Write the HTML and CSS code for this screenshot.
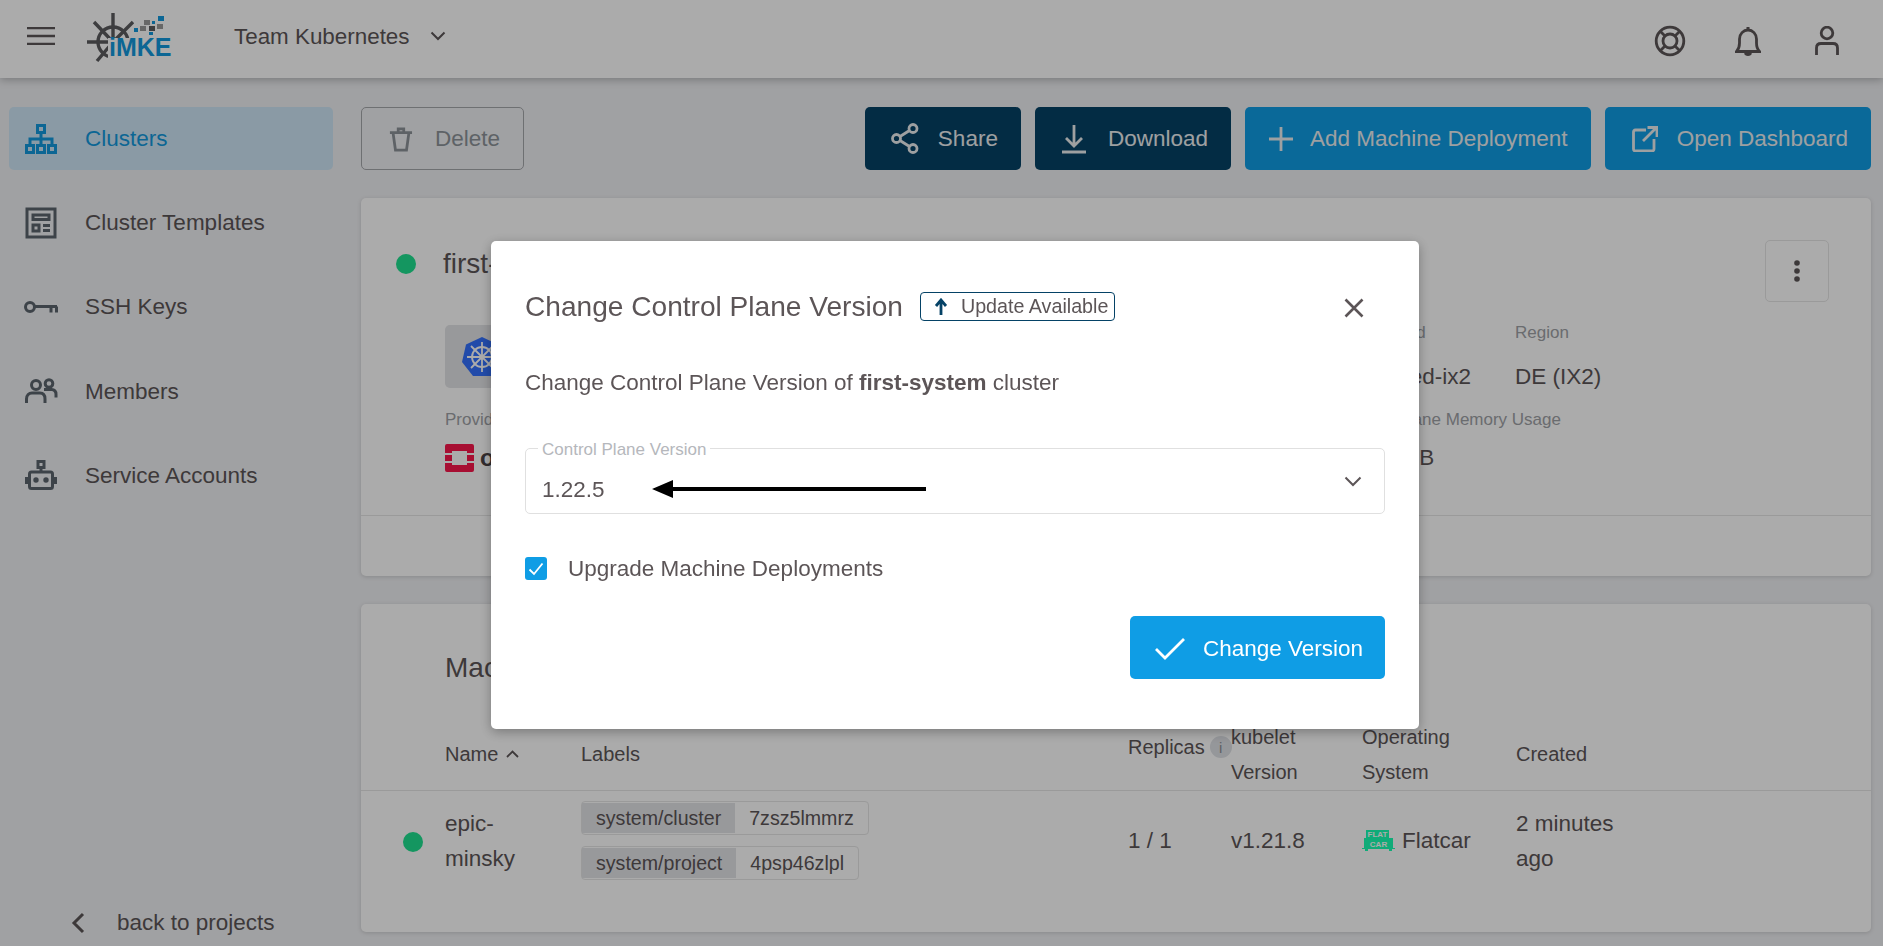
FILE: index.html
```html
<!DOCTYPE html>
<html lang="en">
  <head>
    <meta charset="UTF-8" />
    <meta name="viewport" content="width=device-width, initial-scale=1.0" />
    <title>Clusters</title>
    <link rel="stylesheet" href="styles.css">
  </head>
  <body>
    <header class="toolbar">
      <svg class="menu-icon" width="28" height="18" viewBox="0 0 28 18"><path d="M0 1h28M0 9h28M0 17h28" stroke="#5c5557" stroke-width="2.4"/></svg>
      <svg class="logo" width="90" height="64" viewBox="85 5 90 64">
        <g fill="none" stroke="#5b5b5e" stroke-width="3.4">
          <circle cx="113" cy="43" r="15"/>
          <path d="M113 14V43M87 43H113M94 23L113 43M133 23L113 43M97 62L113 43"/>
        </g>
        <rect x="108" y="39" width="22" height="22" fill="#ffffff"/>
        <g fill="#9a9a9a">
          <rect x="144" y="21" width="6" height="5"/>
          <rect x="157" y="25" width="6" height="5"/>
          <rect x="140" y="27" width="6" height="5"/>
        </g>
        <rect x="149" y="27" width="6" height="5" fill="#5b5b5e"/>
        <g fill="#1299dd">
          <rect x="158" y="17" width="6" height="5"/>
          <rect x="134" y="29" width="4" height="4"/>
          <rect x="152" y="22" width="3" height="3"/>
          <rect x="149" y="33" width="4" height="3"/>
          <text class="logo-text" x="109" y="57">iMKE</text>
        </g>
      </svg>
      <span class="team">Team Kubernetes</span>
      <svg class="team-chevron" width="16" height="10" viewBox="0 0 16 10"><path d="M1.5 1.5L8 8l6.5-6.5" fill="none" stroke="#5c5557" stroke-width="2"/></svg>
      <div class="toolbar-icons">
        <svg width="32" height="32" viewBox="0 0 32 32" fill="none" stroke="#5c5557" stroke-width="2.8"><circle cx="16" cy="16" r="13.8"/><circle cx="16" cy="16" r="7"/><path d="M6.5 6.5l4.5 4.5M25.5 6.5L21 11M6.5 25.5l4.5-4.5M25.5 25.5L21 21"/></svg>
        <svg width="26" height="30" viewBox="0 0 26 30" fill="none" stroke="#5c5557" stroke-width="2.8"><path d="M1.5 25.5c2.5-2.5 3-4.500 3-8.500v-4c0-5 3.800-9 8.500-9s8.500 4 8.500 9v4c0 4 .5 6 3 8.500z"/><path d="M13 1v3M10.500 27c.5 2 4.500 2 5 0" stroke-width="3"/></svg>
        <svg class="user-icon" width="24" height="30" viewBox="0 0 24 30" fill="none" stroke="#5c5557" stroke-width="2.800"><circle cx="12" cy="7" r="5.800"/><path d="M1.500 29v-7c0-3 1.500-4.500 4.500-4.500h12c3 0 4.500 1.500 4.500 4.500v7"/></svg>
      </div>
    </header>

    <div class="layout">
      <nav class="sidebar">
        <a class="nav-item active">
          <svg width="32" height="30" viewBox="0 0 32 30" fill="none" stroke="currentColor" stroke-width="3"><rect x="12.500" y="1.500" width="7" height="7"/><rect x="1.500" y="21.500" width="7" height="7"/><rect x="12.500" y="21.500" width="7" height="7"/><rect x="23.500" y="21.500" width="7" height="7"/><path d="M16 8.500v13M5 21.500v-6.500h22v6.500"/></svg>
          Clusters
        </a>
        <a class="nav-item">
          <svg width="32" height="32" viewBox="0 0 32 32" fill="none" stroke="#5c656e" stroke-width="3"><rect x="2" y="2" width="28" height="28"/><rect x="8" y="8" width="16" height="4.500"/><rect x="8" y="18" width="6" height="6"/><path d="M18 18.500h7M18 23.500h7"/></svg>
          Cluster Templates
        </a>
        <a class="nav-item">
          <svg width="34" height="14" viewBox="0 0 34 14" fill="none" stroke="#5c656e" stroke-width="3"><circle cx="6" cy="7" r="4.500"/><path d="M10.500 6.500H33M27 6.500v6M32.500 6.500v6"/></svg>
          SSH Keys
        </a>
        <a class="nav-item">
          <svg width="32" height="26" viewBox="0 0 32 26" fill="none" stroke="#5c656e" stroke-width="3"><circle cx="11" cy="7" r="4.500"/><circle cx="24" cy="5.500" r="3.800"/><path d="M1.500 25v-4c0-4 2.500-6 5.500-6h8c3 0 5 2 5 6v4M19 11.500h7.500c3 0 4.500 2 4.500 5v3"/></svg>
          Members
        </a>
        <a class="nav-item">
          <svg width="32" height="30" viewBox="0 0 32 30" fill="none" stroke="#5c656e" stroke-width="3"><rect x="13" y="1.500" width="6" height="6"/><path d="M16 7.500V12"/><rect x="4.500" y="12" width="23" height="16.500" rx="2"/><path d="M1.500 17v7M30.500 17v7" stroke-width="3"/><circle cx="11" cy="20" r="1.200" fill="#5c656e"/><circle cx="21" cy="20" r="1.200" fill="#5c656e"/></svg>
          Service Accounts
        </a>
        <a class="back-link">
          <svg width="14" height="22" viewBox="0 0 14 22"><path d="M12 2L3 11l9 9" fill="none" stroke="#5c5557" stroke-width="3"/></svg>
          back to projects
        </a>
      </nav>

      <main class="content">
        <div class="actions">
          <button class="btn btn-outline">
            <svg width="26" height="28" viewBox="0 0 26 28" fill="none" stroke="currentColor" stroke-width="3"><path d="M1 7h24M10 7V3h6v4M4.500 8l2.500 18h12l2.500-18"/></svg>
            Delete
          </button>
          <div class="actions-right">
            <button class="btn btn-dark btn-share">
              <svg width="28" height="31" viewBox="0 0 28 31" fill="none" stroke="currentColor" stroke-width="2.800"><circle cx="5.500" cy="15.500" r="4"/><circle cx="22" cy="5.500" r="4"/><circle cx="22" cy="25.500" r="4"/><path d="M9 13.500l9.500-6M9 17.500l9.500 6"/></svg>
              Share
            </button>
            <button class="btn btn-dark btn-download">
              <svg width="26" height="30" viewBox="0 0 26 30" fill="none" stroke="currentColor" stroke-width="2.800"><path d="M13 1v21M5 14l8 8 8-8M1 28h24" /></svg>
              Download
            </button>
            <button class="btn btn-primary btn-add">
              <svg width="26" height="26" viewBox="0 0 26 26"><path d="M13 1v24M1 13h24" stroke="currentColor" stroke-width="2.800"/></svg>
              Add Machine Deployment
            </button>
            <button class="btn btn-primary btn-open">
              <svg width="26" height="26" viewBox="0 0 26 26" fill="none" stroke="currentColor" stroke-width="2.800"><path d="M14 4H3.500C2 4 1.500 5 1.500 6v17c0 1 .5 2 2 2H20c1 0 2-.5 2-2V13M11 15L24 2M15.500 1.500H25V11"/></svg>
              Open Dashboard
            </button>
          </div>
        </div>

        <section class="card cluster-card">
          <div class="cluster-head">
            <span class="dot"></span>
            <h2 class="card-title">first-system</h2>
            <button class="more-btn">
              <svg width="6" height="22" viewBox="0 0 6 22" fill="#5c5557"><circle cx="3" cy="3" r="2.800"/><circle cx="3" cy="11" r="2.800"/><circle cx="3" cy="19" r="2.800"/></svg>
            </button>
          </div>
          <div class="info-row info-top">
            <div class="tile">
              <svg width="42" height="42" viewBox="0 0 42 42">
                <path d="M21 1L37 8.500L41 26L30 40H12L1 26L5 8.500Z" fill="#3371fe"/>
                <g fill="none" stroke="#ffffff" stroke-width="1.800"><circle cx="21" cy="21" r="10"/><path d="M21 6V36M6 21H36M10 10L32 32M32 10L10 32"/></g>
              </svg>
            </div>
            <div>
              <div class="info-label">Seed</div>
              <div class="info-value">seed-ix2</div>
            </div>
            <div>
              <div class="info-label">Region</div>
              <div class="info-value">DE (IX2)</div>
            </div>
          </div>
          <div class="info-row info-bottom">
            <div>
              <div class="info-label">Provider</div>
              <div class="info-value provider">
                <svg width="29" height="28" viewBox="0 0 29 28"><path d="M2 0H27Q29 0 29 2V9H22V7H7V9H0V2Q0 0 2 0ZM0 11H7V17H0ZM22 11H29V17H22ZM0 19H7V21H22V19H29V26Q29 28 27 28H2Q0 28 0 26Z" fill="#fa164b"/></svg>
                <span class="provider-name">openstack</span>
              </div>
            </div>
            <div>
              <div class="info-label">Control Plane Memory Usage</div>
              <div class="info-value">102.4 MB</div>
            </div>
          </div>
          <div class="card-foot"></div>
        </section>

        <section class="card machines-card">
          <h2 class="card-title machines-title">Machine Deployments</h2>
          <div class="table-row table-head">
            <div></div>
            <div class="name-head head-mid">Name
              <svg width="13" height="8" viewBox="0 0 13 8"><path d="M1 7l5.500-5.500L12 7" fill="none" stroke="#5c5557" stroke-width="1.800"/></svg>
            </div>
            <div class="head-mid">Labels</div>
            <div class="replicas-head">Replicas <span class="info-icon">i</span></div>
            <div>kubelet Version</div>
            <div>Operating System</div>
            <div class="head-mid">Created</div>
          </div>
          <div class="table-row table-body">
            <div><span class="dot row-dot"></span></div>
            <div class="cell-name">epic-minsky</div>
            <div class="chips">
              <div class="chip"><span class="chip-key">system/cluster</span><span class="chip-val">7zsz5lmmrz</span></div>
              <div class="chip"><span class="chip-key">system/project</span><span class="chip-val">4psp46zlpl</span></div>
            </div>
            <div>1 / 1</div>
            <div>v1.21.8</div>
            <div class="os">
              <svg width="33" height="21" viewBox="0 0 33 21">
                <path d="M4 0H27V8H31V18H33V19H30V21H27V19H6V21H3V19H0V18H2V8H4Z" fill="#18ffb3"/>
                <text class="os-text" x="15.500" y="7">FLAT</text>
                <text class="os-text" x="16.500" y="16.500">CAR</text>
              </svg>
              Flatcar
            </div>
            <div class="cell-created">2 minutes ago</div>
          </div>
        </section>
      </main>
    </div>

    <div class="backdrop">
      <div class="dialog">
        <div class="dialog-head">
          <h2 class="dialog-title">Change Control Plane Version</h2>
          <span class="update-tag">
            <svg width="14" height="18" viewBox="0 0 14 18"><path d="M7 17V3M2 8l5-6 5 6" fill="none" stroke="#054266" stroke-width="2.800"/></svg>
            Update Available
          </span>
          <svg class="close-icon" width="20" height="20" viewBox="0 0 20 20"><path d="M1.500 1.500l17 17M18.500 1.500l-17 17" stroke="#5c5557" stroke-width="2.600"/></svg>
        </div>
        <p class="dialog-text">Change Control Plane Version of <b>first-system</b> cluster</p>
        <div class="field">
          <span class="field-label">Control Plane Version</span>
          <span class="field-value">1.22.5</span>
          <svg class="arrow" width="274" height="18" viewBox="0 0 274 18"><path d="M0 9L21 0V7H274V11H21V18Z" fill="#000000"/></svg>
          <svg class="field-chevron" width="18" height="11" viewBox="0 0 18 11"><path d="M1.500 1.500L9 9l7.500-7.500" fill="none" stroke="#5c5557" stroke-width="2"/></svg>
        </div>
        <label class="check-row">
          <span class="checkbox">
            <svg width="16" height="14" viewBox="0 0 16 14"><path d="M1.500 7.500L6 12 14.500 1.500" fill="none" stroke="#ffffff" stroke-width="1.800"/></svg>
          </span>
          Upgrade Machine Deployments
        </label>
        <div class="dialog-foot">
          <button class="btn btn-change">
            <svg width="32" height="24" viewBox="0 0 32 24"><path d="M2 12l9 9L30 2" fill="none" stroke="#ffffff" stroke-width="2.800"/></svg>
            Change Version
          </button>
        </div>
      </div>
    </div>
  </body>
</html>
```

FILE: styles.css
```css
* {
  box-sizing: border-box;
}
body {
  margin: 0;
  height: 946px;
  overflow: hidden;
  font-family: "Liberation Sans", Arial, sans-serif;
  font-size: 22.5px;
  line-height: 35px;
  color: #5c5557;
  background: #eff0f3;
}
button {
  font-family: inherit;
}

/* top bar */
.toolbar {
  display: flex;
  align-items: center;
  height: 78px;
  padding-left: 27px;
  background: #ffffff;
  box-shadow: 0 2px 8px rgba(0, 0, 0, 0.25);
}
.menu-icon {
  margin-top: -6px;
}
.logo {
  margin-left: 30px;
  margin-top: -6px;
}
.logo-text {
  font-size: 25px;
  font-weight: bold;
}
.team {
  margin-left: 59px;
  margin-top: -6px;
  font-size: 22.4px;
}
.team-chevron {
  margin-left: 20px;
  margin-top: -6px;
}
.toolbar-icons {
  display: flex;
  align-items: center;
  gap: 49px;
  margin-left: auto;
  margin-right: 44px;
  margin-top: 4px;
}
.user-icon {
  margin-left: 5px;
}

/* sidebar */
.layout {
  display: flex;
  height: 868px;
}
.sidebar {
  position: relative;
  display: flex;
  flex-direction: column;
  gap: 21.2px;
  width: 361px;
  padding: 29px 28px 0 9px;
}
.nav-item {
  display: flex;
  align-items: center;
  height: 63px;
  border-radius: 5px;
}
.nav-item svg {
  flex: none;
  width: 34px;
  margin-left: 15px;
  margin-right: 27px;
}
.nav-item.active {
  background: #cee6f6;
  color: #1299dd;
}
.back-link {
  display: flex;
  align-items: center;
  gap: 32px;
  margin-top: auto;
  margin-bottom: 6px;
  padding-left: 62px;
}

/* main area */
.content {
  flex: 1;
  padding: 29px 12px 0 0;
}
.actions {
  display: flex;
  justify-content: space-between;
}
.actions-right {
  display: flex;
  gap: 14px;
}
.btn {
  display: flex;
  align-items: center;
  gap: 19px;
  height: 63px;
  padding: 0 23px 0 26px;
  border: 0;
  border-radius: 5px;
  font-size: 22.5px;
  color: #eceff1;
}
.btn-outline {
  width: 163px;
  gap: 22px;
  padding-left: 27px;
  background: transparent;
  border: 1px solid #a5a7ab;
  color: #8d9399;
}
.btn-dark {
  background: #054266;
}
.btn-primary {
  background: #0f9de5;
}
.btn-download {
  gap: 21px;
}
.btn-add {
  gap: 16px;
  padding-left: 23px;
}
.btn-open {
  padding-left: 27px;
}
.card {
  background: #ffffff;
  border-radius: 5px;
  box-shadow: 0 1px 4px rgba(0, 0, 0, 0.15);
}
.cluster-card {
  display: flex;
  flex-direction: column;
  height: 378px;
  margin-top: 28px;
  padding-top: 42px;
}
.cluster-head {
  display: flex;
  align-items: center;
  height: 62px;
  padding: 0 42px 0 35px;
}
.dot {
  display: block;
  flex: none;
  width: 20px;
  height: 20px;
  border-radius: 50%;
  background: #1fe08f;
}
.cluster-head .dot {
  margin-top: -14px;
}
.card-title {
  margin: 0;
  font-size: 28px;
  font-weight: normal;
  line-height: 35px;
}
.cluster-head .card-title {
  margin-left: 27px;
  margin-top: -16px;
}
.more-btn {
  display: flex;
  align-items: center;
  justify-content: center;
  width: 64px;
  height: 62px;
  margin-left: auto;
  padding: 0;
  background: transparent;
  border: 1px solid #e6e6e6;
  border-radius: 5px;
}
.info-row {
  display: grid;
  padding-left: 84px;
}
.info-top {
  grid-template-columns: 941px 129px auto;
  margin-top: 20px;
}
.info-bottom {
  grid-template-columns: 893px auto;
  margin-top: 15px;
}
.info-label {
  font-size: 17px;
  line-height: 22px;
  color: #9ea1a6;
}
.info-top .info-value {
  margin-top: 15px;
}
.info-bottom .info-value {
  margin-top: 9px;
}
.tile {
  display: flex;
  align-items: center;
  width: 200px;
  height: 63px;
  margin-top: 3px;
  padding-left: 16px;
  border-radius: 5px;
  background: #e3e4e7;
}
.provider {
  display: flex;
  align-items: center;
  gap: 6px;
}
.provider-name {
  font-weight: bold;
  font-size: 24px;
  color: #4a4245;
}
.card-foot {
  margin-top: auto;
  height: 61px;
  border-top: 1px solid #e6e6e6;
}

/* machine deployments */
.machines-card {
  height: 328px;
  margin-top: 28px;
  padding-top: 46px;
}
.machines-title {
  margin-left: 84px;
}
.table-row {
  display: grid;
  grid-template-columns: 84px 136px 547px 103px 131px 154px 180px;
  align-items: center;
}
.table-head {
  margin-top: 35px;
  border-bottom: 1px solid #e6e6e6;
  font-size: 20px;
}
.head-mid {
  margin-bottom: 2px;
}
.name-head {
  display: flex;
  align-items: center;
  gap: 8px;
}
.replicas-head {
  display: flex;
  align-items: center;
  gap: 5px;
  width: 110px;
  margin-bottom: 16px;
}
.info-icon {
  display: flex;
  align-items: center;
  justify-content: center;
  flex: none;
  width: 22px;
  height: 22px;
  border-radius: 50%;
  background: #dfe1e6;
  font-size: 15px;
  color: #8f9298;
}
.table-body {
  height: 99px;
}
.cell-name {
  width: 90px;
}
.cell-created {
  width: 120px;
}
.row-dot {
  margin-left: 42px;
  margin-top: 2px;
}
.chips {
  display: flex;
  flex-direction: column;
  align-items: flex-start;
  gap: 11px;
}
.chip {
  display: flex;
  height: 34px;
  border: 1px solid #e6e6e6;
  border-radius: 4px;
  font-size: 19.6px;
  line-height: 32px;
}
.chip-key {
  padding: 0 14px;
  margin: 1px 0;
  line-height: 30px;
  background: #e3e4e7;
}
.chip-val {
  padding: 0 14px;
}
.os {
  display: flex;
  align-items: center;
  gap: 7px;
}
.os-text {
  font-size: 8px;
  font-weight: bold;
  text-anchor: middle;
  fill: #ffffff;
}

/* dialog on top of everything */
.backdrop {
  position: fixed;
  inset: 0;
  padding: 241px 0 0 491px;
  background: rgba(0, 0, 0, 0.33);
}
.dialog {
  width: 928px;
  height: 488px;
  padding: 51px 34px 50px;
  background: #ffffff;
  border-radius: 5px;
  box-shadow: 0 3px 12px rgba(0, 0, 0, 0.3);
}
.dialog-head {
  display: flex;
  align-items: center;
  height: 29px;
}
.dialog-title {
  margin: 0;
  font-size: 28.1px;
  font-weight: normal;
}
.update-tag {
  display: flex;
  align-items: center;
  gap: 13px;
  height: 29px;
  margin-left: 17px;
  padding: 0 6px 0 13px;
  border: 1px solid #054266;
  border-radius: 4px;
  font-size: 19.7px;
}
.close-icon {
  margin-left: auto;
  margin-right: 21px;
  margin-top: 2px;
}
.dialog-text {
  margin: 44px 0 0;
}
.field {
  position: relative;
  display: flex;
  align-items: center;
  height: 66px;
  margin-top: 48px;
  padding: 16px 0 0 16px;
  border: 1px solid #e0e0e0;
  border-radius: 5px;
}
.field-label {
  position: absolute;
  left: 12px;
  top: -10px;
  padding: 0 4px;
  background: #ffffff;
  font-size: 17px;
  line-height: 22px;
  color: #b5b7bc;
}
.arrow {
  margin-left: 47px;
}
.field-chevron {
  margin-left: auto;
  margin-right: 22px;
  margin-top: -16px;
}
.check-row {
  display: flex;
  align-items: center;
  gap: 21px;
  margin-top: 37px;
}
.checkbox {
  display: flex;
  align-items: center;
  justify-content: center;
  width: 22px;
  height: 23px;
  border-radius: 3px;
  background: #0f9de5;
}
.dialog-foot {
  display: flex;
  justify-content: flex-end;
  margin-top: 30px;
}
.btn-change {
  gap: 17px;
  width: 255px;
  padding: 3px 0 0 24px;
  background: #0f9de5;
  color: #ffffff;
}
```
